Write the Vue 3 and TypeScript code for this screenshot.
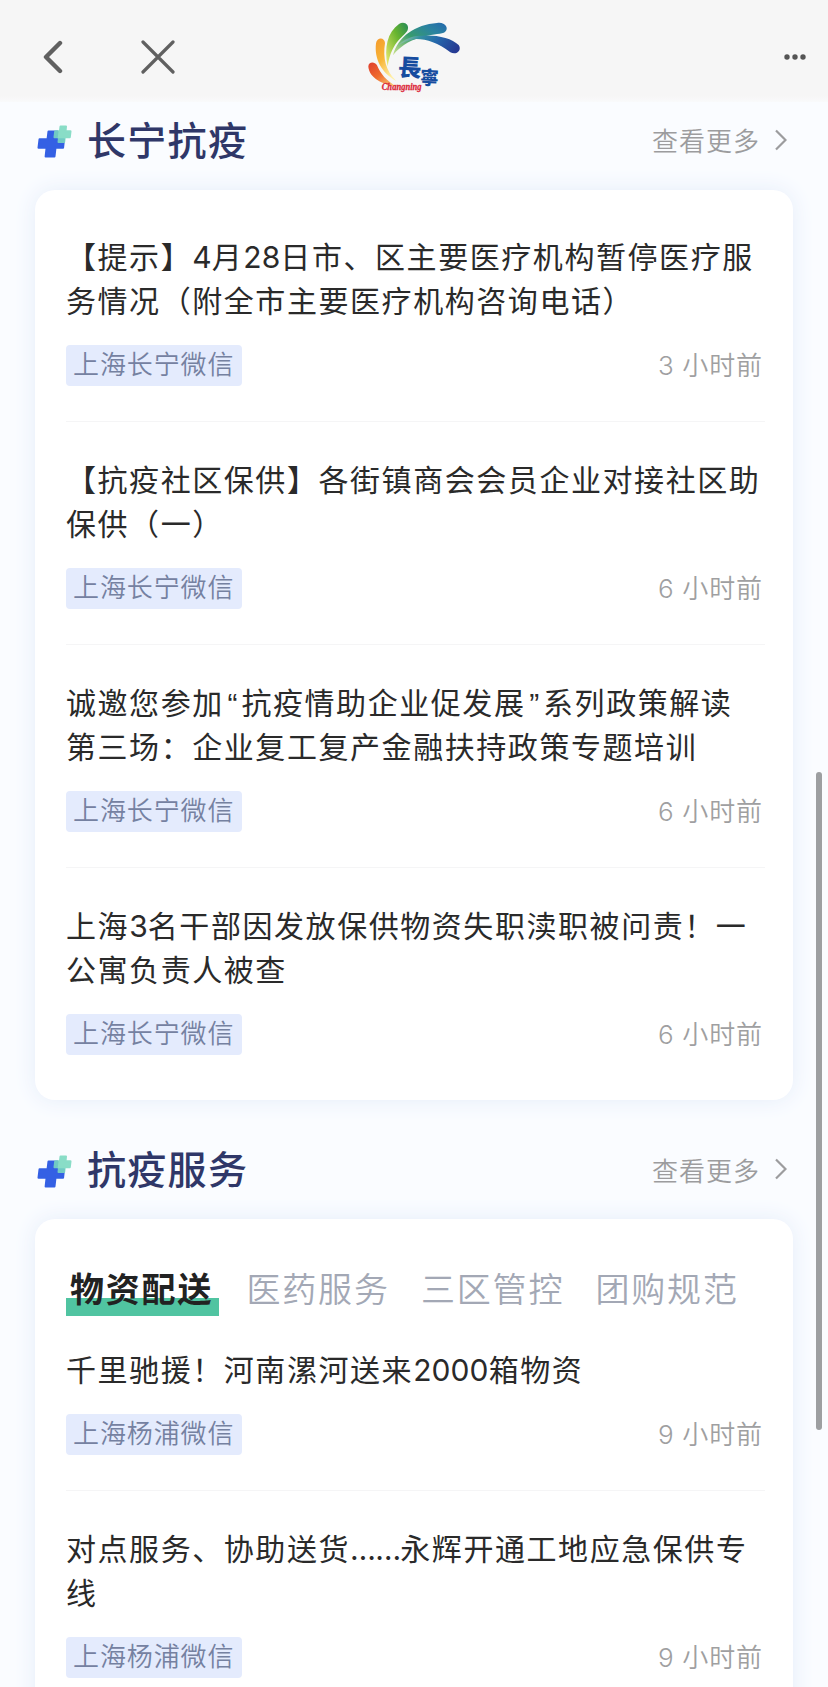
<script setup lang="ts">
interface Article {
  lines: string[]
  source: string
  time: string
}

interface Section {
  name: string
  tabs: string[]
  articles: Article[]
}

interface Run {
  text: string
  kind: string
}

// Splits a line into runs so digits, quotes and ellipses get their own spacing.
function runs(line: string): Run[] {
  return line
    .split(/([“”]|…+|\d+)/)
    .filter((text) => text !== '')
    .map((text) => ({
      text,
      kind: /^\d/.test(text) ? 'digits' : /^[“”]/.test(text) ? 'quote' : /^…/.test(text) ? 'ellipsis' : 'plain',
    }))
}

const sections: Section[] = [
  {
    name: '长宁抗疫',
    tabs: [],
    articles: [
      { lines: ['【提示】4月28日市、区主要医疗机构暂停医疗服', '务情况（附全市主要医疗机构咨询电话）'], source: '上海长宁微信', time: '3 小时前' },
      { lines: ['【抗疫社区保供】各街镇商会会员企业对接社区助', '保供（一）'], source: '上海长宁微信', time: '6 小时前' },
      { lines: ['诚邀您参加“抗疫情助企业促发展”系列政策解读', '第三场：企业复工复产金融扶持政策专题培训'], source: '上海长宁微信', time: '6 小时前' },
      { lines: ['上海3名干部因发放保供物资失职渎职被问责！一', '公寓负责人被查'], source: '上海长宁微信', time: '6 小时前' },
    ],
  },
  {
    name: '抗疫服务',
    tabs: ['物资配送', '医药服务', '三区管控', '团购规范'],
    articles: [
      { lines: ['千里驰援！河南漯河送来2000箱物资'], source: '上海杨浦微信', time: '9 小时前' },
      { lines: ['对点服务、协助送货……永辉开通工地应急保供专', '线'], source: '上海杨浦微信', time: '9 小时前' },
    ],
  },
]
</script>

<template>
  <div class="screen">
    <header class="nav">
      <svg class="back" viewBox="0 0 20 34" width="20" height="34"><path d="M17 3 3 17 17 31" /></svg>
      <svg class="close" viewBox="0 0 34 34" width="34" height="34"><path d="M2 2 32 32M32 2 2 32" /></svg>
      <svg class="logo" viewBox="0 0 360 270" width="120" height="90">
        <defs>
          <linearGradient id="red" x1="0" y1="0" x2="1" y2="1"><stop offset="0" stop-color="#df3e2e" /><stop offset=".45" stop-color="#ef6b2d" /><stop offset="1" stop-color="#fbdc83" /></linearGradient>
          <linearGradient id="amber" x1="0" y1="0" x2=".6" y2="1"><stop offset="0" stop-color="#f49a2b" /><stop offset=".5" stop-color="#f8b638" /><stop offset="1" stop-color="#fff0a8" /></linearGradient>
          <linearGradient id="green" x1="1" y1="0" x2="0" y2="1"><stop offset="0" stop-color="#248a57" /><stop offset=".4" stop-color="#69b52f" /><stop offset="1" stop-color="#f2ed73" /></linearGradient>
          <linearGradient id="teal" x1="1" y1="0" x2="0" y2="1"><stop offset="0" stop-color="#2467ad" /><stop offset=".25" stop-color="#2a83a0" /><stop offset=".55" stop-color="#389c6c" /><stop offset="1" stop-color="#d0e58d" /></linearGradient>
          <linearGradient id="blue" x1="1" y1=".5" x2="0" y2=".3"><stop offset="0" stop-color="#263a93" /><stop offset=".4" stop-color="#2568ab" /><stop offset=".7" stop-color="#3590a0" /><stop offset="1" stop-color="#9fd0a0" /></linearGradient>
        </defs>
        <path fill="url(#red)" d="M40 170C40 156 58 153 66 166 76 190 94 214 126 230 84 224 43 204 40 170Z" />
        <path fill="url(#amber)" d="M63 100C65 81 89 80 90 99 83 145 92 183 124 213 82 190 57 150 63 100Z" />
        <path fill="url(#green)" d="M132 42C146 32 164 42 158 60 150 79 110 91 98 169 87 112 97 67 132 42Z" />
        <path fill="url(#teal)" d="M246 39C268 34 284 54 270 66 254 78 168 67 114 136 129 79 181 44 246 39Z" />
        <path fill="url(#blue)" d="M184 78C238 72 288 82 311 105 322 121 304 137 286 127 250 98 216 88 184 87 158 91 142 98 128 108 145 90 162 82 184 78Z" />
        <text class="brand" x="130" y="198" font-size="70" transform="rotate(3 165 170)">長</text>
        <text class="brand" x="196" y="223" font-size="56" transform="rotate(3 220 190)">寧</text>
        <text class="latin" x="80" y="239" font-size="28" textLength="120" lengthAdjust="spacingAndGlyphs">Changning</text>
      </svg>
      <svg class="dots" viewBox="0 0 24 6" width="24" height="6"><circle cx="4" cy="3" r="2.7" /><circle cx="12" cy="3" r="2.7" /><circle cx="20" cy="3" r="2.7" /></svg>
    </header>

    <main>
      <section v-for="section in sections" :key="section.name" class="section">
        <div class="heading">
          <svg class="plus" viewBox="0 0 36 34" width="36" height="34">
            <path class="cross-blue" d="M11.500 6.500h9l-1 7.800h7.500l-.9 8.400h-7.600l-1 8.800H8.600l1-8.800H1.500l1-8.400h8Z" />
            <path class="cross-green" d="M23.500 1.500h5.500l-.5 4.800h5l-.7 5.900h-5l-.6 4.800h-5.700l.6-4.800h-4.600l.7-5.900h4.700Z" />
          </svg>
          <h2>{{ section.name }}</h2>
          <a class="more">查看更多<svg viewBox="0 0 12 22" width="12" height="22"><path d="M1 1.500 10.500 11 1 20.500" /></svg></a>
        </div>
        <div class="card" :class="{ tabbed: section.tabs.length }">
          <nav v-if="section.tabs.length" class="tabs">
            <span v-for="(tab, i) in section.tabs" :key="tab" class="tab" :class="{ active: i === 0 }">{{ tab }}</span>
          </nav>
          <article v-for="article in section.articles" :key="article.lines[0]" class="article">
            <h3>
              <span v-for="line in article.lines" :key="line" class="line"><span v-for="(run, i) in runs(line)" :key="i" :class="run.kind">{{ run.text }}</span></span>
            </h3>
            <div class="meta">
              <span class="source">{{ article.source }}</span>
              <time>{{ article.time }}</time>
            </div>
          </article>
        </div>
      </section>
    </main>
    <div class="scrollbar"></div>
  </div>
</template>

<style>
body { overflow: hidden; }
</style>

<style scoped>
.screen {
  position: relative;
  box-sizing: border-box;
  width: 828px;
  height: 1687px;
  overflow: hidden;
  background: #fafcff;
  color: #2a2a2a;
  font-family: Inter, "Noto Sans CJK SC", sans-serif;
}
.nav {
  display: flex;
  align-items: center;
  box-sizing: border-box;
  height: 102px;
  padding: 12px 21px 0 43px;
  background: linear-gradient(#f6f6f6 94%, #f9fafb);
}
.back, .close { fill: none; stroke: #606060; stroke-linecap: round; stroke-linejoin: round; }
.back { stroke-width: 4.4; }
.close { margin-left: 78px; stroke-width: 3.2; }
.logo { margin: -4px 0 0 180px; }
.brand { fill: #164c9f; font-family: "Noto Sans CJK TC", sans-serif; font-weight: 900; }
.latin { fill: #dc2638; stroke: #dc2638; stroke-width: 0.8; font-family: "Liberation Serif", serif; font-weight: 700; font-style: italic; }
.dots { margin-left: auto; fill: #555; }
.section { margin-bottom: 30px; }
.heading {
  display: flex;
  align-items: center;
  height: 80px;
  padding: 0 41px 11px 37px;
  margin-bottom: -2px;
}
.section:first-child .heading { height: 77px; margin-bottom: 0; }
.plus { margin-top: 3px; stroke-width: 2; stroke-linejoin: round; }
.cross-blue { fill: #3460e4; stroke: #3460e4; }
.cross-green { fill: #7ad9c0; stroke: #7ad9c0; opacity: 0.88; }
h2 {
  margin: 0 0 0 14px;
  color: #2f3768;
  font-size: 39px;
  font-weight: 500;
  line-height: 50px;
  letter-spacing: 1.3px;
}
.more {
  display: flex;
  align-items: center;
  gap: 15px;
  margin: -2px 0 0 auto;
  color: #9c9c9e;
  font-size: 26px;
  font-weight: 350;
  letter-spacing: 1px;
}
.more svg { fill: none; stroke: #9c9c9e; stroke-width: 2.2; }
.card {
  margin: 0 35px;
  padding: 45px 28px 45px 31px;
  border-radius: 20px;
  background: #fff;
  box-shadow: 0 0 22px #e5edf9;
}
.card.tabbed { padding-top: 48px; }
.article + .article { margin-top: 35px; padding-top: 36px; border-top: 1px solid #f5f5f6; }
h3 {
  margin: 0;
  font-size: 30px;
  font-weight: 400;
  line-height: 44px;
  letter-spacing: 1.56px;
}
.line { display: block; height: 44px; white-space: nowrap; }
.digits { letter-spacing: 0.1px; }
.quote { display: inline-block; width: 17.6px; line-height: 30px; text-align: center; letter-spacing: 0; font-family: "Liberation Sans", sans-serif; }
.ellipsis { letter-spacing: -0.8px; }
.meta { display: flex; align-items: center; justify-content: space-between; height: 41px; margin-top: 22px; padding-right: 2px; }
.source {
  box-sizing: border-box;
  width: 176px;
  height: 41px;
  padding-left: 7px;
  border-radius: 4px;
  background: #e4ebfd;
  color: #7581a1;
  font-size: 26px;
  font-weight: 350;
  line-height: 39px;
  letter-spacing: 0.9px;
}
time { color: #9f9fa1; font-size: 26px; font-weight: 350; line-height: 38px; letter-spacing: 0.9px; word-spacing: -0.5px; }
.tabs { display: flex; gap: 21.5px; height: 49px; margin-bottom: 32px; }
.tab {
  box-sizing: border-box;
  width: 153px;
  height: 49px;
  padding-left: 6px;
  color: #a3a8b5;
  font-size: 34px;
  font-weight: 350;
  line-height: 46px;
  letter-spacing: 1.8px;
  white-space: nowrap;
}
.tab.active { padding-left: 4px; background: linear-gradient(transparent 31px, #50c4a1 31px); color: #222; font-weight: 700; }
.scrollbar { position: absolute; top: 772px; right: 6px; width: 6px; height: 658px; border-radius: 3px; background: #9d9fa1; }
</style>
